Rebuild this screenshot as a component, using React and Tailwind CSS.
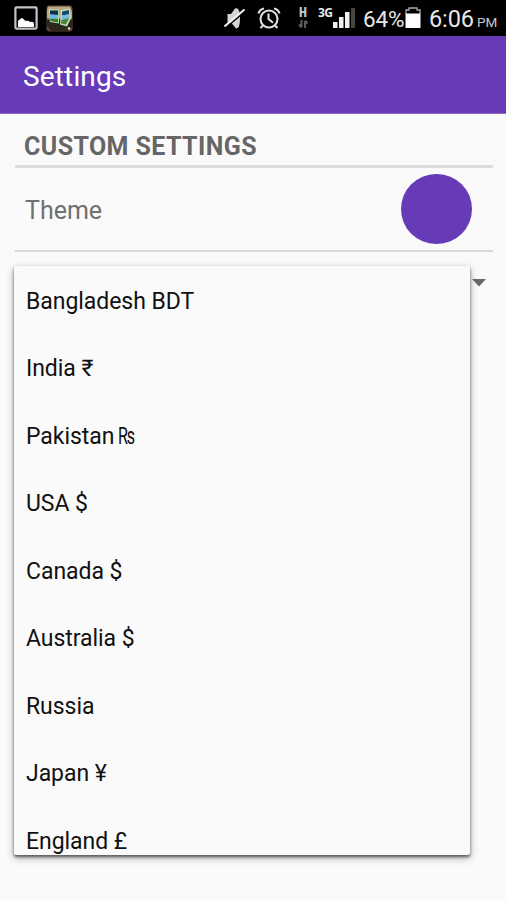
import React from 'react';

const currencies = [
  'Bangladesh BDT',
  'India ₹',
  'Pakistan ₨',
  'USA $',
  'Canada $',
  'Australia $',
  'Russia',
  'Japan ¥',
  'England £',
];

function PhotoIcon() {
  return (
    <svg className="ml-[14px] h-6 w-6 shrink-0" viewBox="0 0 24 24">
      <rect x="1.4" y="1.4" width="21.2" height="21.2" rx="1" fill="#000" stroke="#c4c4c4" strokeWidth="2.2" />
      <path d="M4 21v-5q0-2.500 2-2.500Q7 11 9 12.500q1.500 2 3.500 2.500 2-1 3.500 1 4-1 4 2V21z" fill="#fff" />
    </svg>
  );
}

function GameIcon() {
  return (
    <svg className="ml-2 h-[27px] w-[27px] shrink-0" viewBox="0 0 27 27">
      <rect x=".5" y=".5" width="26" height="26" rx="3" fill="#5f4930" />
      <path d="M2 1.500h22l2 5v7H1V5z" fill="#b9a983" />
      <path d="M1 15h25v7l-4 4H5l-4-5z" fill="#2d281d" />
      <path d="M2.500 4l10.500.500v14L4 17z" fill="#b6d6a5" />
      <path d="M4 5.500h8V10l-8-.5z" fill="#102f50" />
      <path d="M4 9.500l8 .5v4l-8-.5z" fill="#69b8e8" />
      <path d="M4 13.500l8 .5v3.500L4.500 16z" fill="#39792c" />
      <path d="M15 5l9-1.500 1 9.500-4 8.500-7-2z" fill="#c5dcae" />
      <path d="M16 6.500l7-1.500v4.500l-7 1.200z" fill="#174870" />
      <path d="M16 10.500l7.200-1.500.3 4-8 2z" fill="#70bee8" />
      <path d="M15.500 15l7.500-2-3 6.500-5-1z" fill="#43853b" />
      <circle cx="23" cy="23.5" r="1.3" fill="#ddd" />
    </svg>
  );
}

function MuteIcon() {
  return (
    <svg className="h-[22px] w-[22px] shrink-0" viewBox="0 0 22 22">
      <path d="M3.500 7H7l4-5.500Q16 0 16 11T12 21.500L7.500 16h-4z" fill="#d4d4d4" />
      <path d="M2 20.500L21 4.300" stroke="#000" strokeWidth="1.600" />
      <path d="M.5 19.500L20.500 2.500" stroke="#f0f0f0" strokeWidth="2" />
    </svg>
  );
}

function AlarmIcon() {
  return (
    <svg className="ml-[11px] h-[23px] w-6 shrink-0" viewBox="0 0 24 23" fill="none" stroke="#dedede">
      <circle cx="12" cy="12" r="8.5" strokeWidth="2.100" />
      <path d="M11.5 6.500V12l4.500 3.700" strokeWidth="2.100" />
      <path d="M1.500 6.500Q2.500 2.500 7 1.500M17 1.500q4.500 1 5.500 5M6 18.500L3.500 21M18 18.500l2.500 2.500" strokeWidth="2.200" />
    </svg>
  );
}

function StatusBar() {
  return (
    <div className="flex h-9 items-center bg-black whitespace-nowrap text-[#e8e8e8]">
      <PhotoIcon />
      <GameIcon />
      <div className="ml-[151px] flex items-center">
        <MuteIcon />
        <AlarmIcon />
      </div>
      <div className="ml-[17px] flex h-[22px] w-[10px] flex-col items-center">
        <span className="font-['Liberation_Mono',monospace] text-[14px] leading-[12px] font-bold text-[#c8c8c8]">H</span>
        <svg className="mt-px h-[8px] w-[10px]" viewBox="0 0 10 8">
          <path d="M3.500 0v7M1 4.500L3.500 7.500M7 8V1M9.500 3.500L7 .5" stroke="#5c5c5c" strokeWidth="2.100" fill="none" />
        </svg>
      </div>
      <div className="ml-[10px] flex h-[22px] w-[37px] items-start">
        <span className="w-[15px] shrink-0 font-['Open_Sans',sans-serif] text-[12px] leading-[11px] font-bold tracking-[-0.6px]">3G</span>
        <svg className="h-[22px] w-[22px] shrink-0" viewBox="0 0 22 22">
          <path d="M0 15h4.500v6H0zM6 10h4.500v11H6zM12 5h4.500v16H12z" fill="#f0f0f0" />
          <path d="M18 1h4v20h-4z" fill="#444" />
        </svg>
      </div>
      <span className="ml-[8px] w-[42px] pt-px text-[22.5px] leading-[34px] tracking-[-0.2px]">64%</span>
      <svg className="h-[22px] w-4 shrink-0" viewBox="0 0 16 22">
        <path d="M1 7V3h3V1h8v2h3v4" fill="none" stroke="#aaa" strokeWidth="1.300" />
        <path d="M.5 6.500h15V21H.5z" fill="#fff" />
      </svg>
      <div className="ml-[8px] flex items-baseline">
        <span className="w-[48px] pt-px text-[23.5px] leading-[34px] tracking-[-0.1px]">6:06</span>
        <span className="text-[13.5px] text-[#c8c8c8]">PM</span>
      </div>
    </div>
  );
}

export default function App() {
  return (
    <div className="relative h-[900px] w-[506px] overflow-hidden bg-[#fafafa] font-[Roboto,sans-serif]">
      <StatusBar />
      <header className="flex h-[78px] items-center border-b border-[#8c69c4] bg-[#673ab7] pt-[5px] pl-[23px] text-white">
        <h1 className="text-[28px] leading-8 tracking-[0.15px]">Settings</h1>
      </header>
      <main className="mr-[13px] ml-[15px] text-[#666]">
        <h2 className="flex h-[54px] items-center border-b-[3px] border-[#dcdcdc] pt-[15px] pl-[9px] text-[25px] leading-[30px] font-bold tracking-[0.4px]">
          CUSTOM SETTINGS
        </h2>
        <div className="flex h-[84px] items-center justify-between border-b-2 border-[#d8d8d8] pr-[21px] pl-[10px]">
          <span className="mt-[3px] text-[25px] leading-[30px] text-[#707070]">Theme</span>
          <button className="h-[70px] w-[71px] rounded-full bg-[#673ab7]" aria-label="Theme colour" />
        </div>
        <div className="flex h-[61px] items-center justify-end pr-[7px]">
          <svg className="h-[8px] w-[14px]" viewBox="0 0 14 8">
            <path d="M0 0h14L7 7.500z" fill="#686868" />
          </svg>
        </div>
      </main>
      <ul className="absolute top-[266px] left-[14px] h-[589px] w-[456px] overflow-hidden rounded-[2px] bg-[#fafafa] pt-[2px] text-[23px] text-[#111] shadow-[0_2px_3px_rgba(0,0,0,0.55),0_3px_8px_rgba(0,0,0,0.3)]">
        {currencies.map((name) => {
          const [country, sign] = name.split(/ (?=₨)/);
          return (
            <li key={name} className="flex h-[67.5px] items-center pl-3 whitespace-pre">
              <span className="tracking-[-0.05px]">{country}</span>
              {sign && <span className="origin-left scale-x-[0.7]">{' ' + sign}</span>}
            </li>
          );
        })}
      </ul>
    </div>
  );
}
